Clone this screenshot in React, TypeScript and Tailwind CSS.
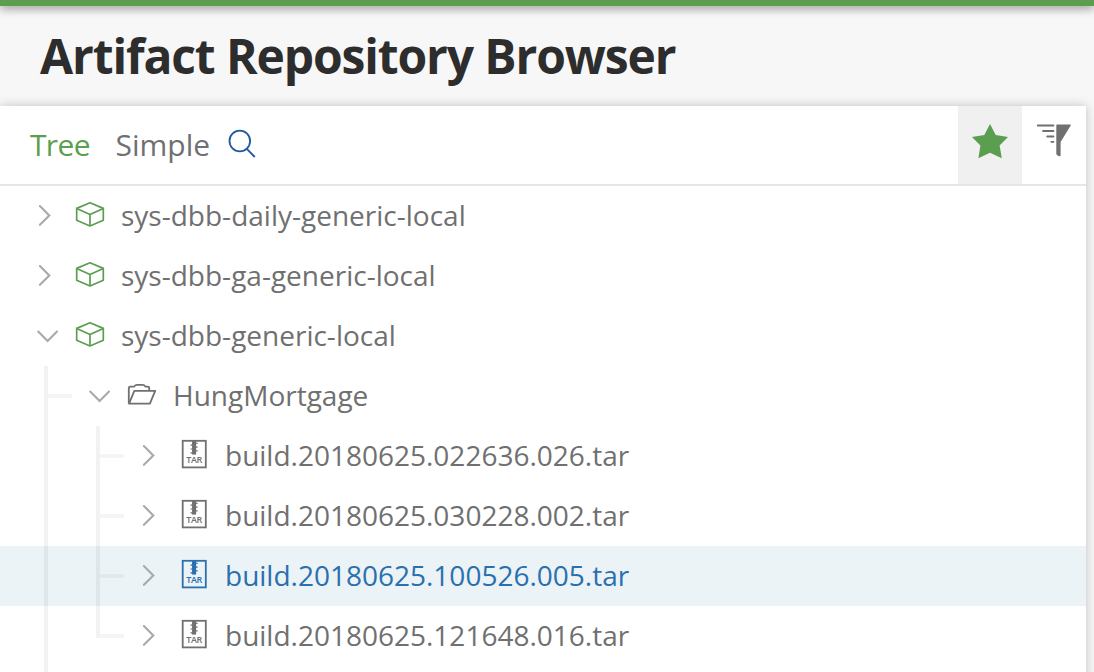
import React from "react";

type Kind = "repo" | "folder" | "tar";

interface Node {
  name: string;
  kind: Kind;
  level: number;
  open?: boolean;
  selected?: boolean;
  last?: boolean;
}

const nodes: Node[] = [
  { name: "sys-dbb-daily-generic-local", kind: "repo", level: 0 },
  { name: "sys-dbb-ga-generic-local", kind: "repo", level: 0 },
  { name: "sys-dbb-generic-local", kind: "repo", level: 0, open: true },
  { name: "HungMortgage", kind: "folder", level: 1, open: true },
  { name: "build.20180625.022636.026.tar", kind: "tar", level: 2 },
  { name: "build.20180625.030228.002.tar", kind: "tar", level: 2 },
  { name: "build.20180625.100526.005.tar", kind: "tar", level: 2, selected: true },
  { name: "build.20180625.121648.016.tar", kind: "tar", level: 2, last: true },
];

function Chevron({ open }: { open?: boolean }) {
  return (
    <svg className="h-[60px] w-8 shrink-0 text-[#a9a9a9]" viewBox="0 0 32 60" fill="none" stroke="currentColor" strokeWidth="2.1" strokeLinecap="round">
      {open ? <path d="M8.2 25.6 17.6 35 27 25.6" /> : <path d="M9.9 20 19.3 29.4 9.9 38.8" />}
    </svg>
  );
}

function KindIcon({ kind }: { kind: Kind }) {
  if (kind === "repo") {
    return (
      <svg className="h-[60px] w-8 shrink-0 text-[#5b9e50]" viewBox="0 0 32 60" fill="none" stroke="currentColor" strokeWidth="1.7" strokeLinejoin="round">
        <path d="M16 16.8 29.3 22.4V34.3L16 40 2.7 34.3V22.4Z" />
        <path d="M2.7 22.4 16 28.6 29.3 22.4M16 28.6V40" />
      </svg>
    );
  }
  if (kind === "folder") {
    return (
      <svg className="h-[60px] w-8 shrink-0 text-[#707070]" viewBox="0 0 32 60" fill="none" stroke="currentColor" strokeWidth="1.8" strokeLinejoin="round">
        <path d="M2.8 37.5V22Q2.8 20.6 4.3 20.6H8.2Q9.3 18.8 11 18.8H16.5Q18.3 18.8 19.4 20.6H21.5Q23.2 20.6 23.2 22V24.8" />
        <path d="M8.3 24.8H29.2L23.9 37.7H3.1Z" />
      </svg>
    );
  }
  return (
    <svg className="h-[60px] w-8 shrink-0" viewBox="0 0 32 60" fill="none" stroke="currentColor">
      <rect x="4.7" y="14.8" width="23.1" height="26.6" strokeWidth="1.8" />
      <path d="M16.1 15V28.6" strokeWidth="4" />
      <path d="M14 17.3H19.6M12.5 19.2H18M14 21.1H19.6M12.5 23H18M14 24.9H19.6M12.5 26.8H18" strokeWidth="1.2" />
      <text x="16.1" y="37.1" textAnchor="middle" fill="currentColor" stroke="none" className="font-['Open_Sans',sans-serif] text-[9px] font-semibold tracking-[-0.3px]">
        TAR
      </text>
    </svg>
  );
}

function Branch({ last }: { last?: boolean }) {
  return (
    <div className="flex h-[60px] w-7 shrink-0">
      <div className={last ? "h-8 w-1 bg-black/5" : "h-[60px] w-1 bg-black/5"} />
      <div className="mt-7 h-1 flex-1 bg-black/4" />
    </div>
  );
}

function TreeRow({ node }: { node: Node }) {
  return (
    <div className={node.selected ? "flex h-[60px] items-start bg-[#ebf3f7] text-[#2a6fae]" : "flex h-[60px] items-start text-[#707070]"}>
      {node.level === 0 && <div className="w-[30px] shrink-0" />}
      {node.level > 0 && <div className="w-11 shrink-0" />}
      {node.level === 2 && <div className="mr-12 h-[60px] w-1 shrink-0 bg-black/5" />}
      {node.level > 0 && <Branch last={node.last} />}
      <div className={node.level > 0 ? "ml-[10px] flex" : "flex"}>
        <Chevron open={node.open} />
      </div>
      <div className="ml-3 flex">
        <KindIcon kind={node.kind} />
      </div>
      <span className="ml-[15px] whitespace-nowrap text-[28px] leading-[58px]">{node.name}</span>
    </div>
  );
}

export default function App() {
  return (
    <div className="flex h-[672px] w-[1094px] flex-col overflow-hidden bg-[#f7f7f7] font-['Open_Sans',sans-serif]">
      <div className="h-1.5 shrink-0 bg-[#5b9e50] shadow-[0_2px_10px_rgba(0,0,0,0.5)]" />
      <header className="flex h-[100px] shrink-0 items-start pl-10">
        <h1 className="text-[48px] leading-[100px] font-bold tracking-[-1.12px] whitespace-nowrap text-[#2d2d2d]">Artifact Repository Browser</h1>
      </header>
      <main className="h-[620px] w-[1086px] shrink-0 bg-white shadow-[0_0_10px_rgba(0,0,0,0.22)]">
        <div className="flex h-20 items-center border-b-2 border-[#e6e6e6]">
          <button className="ml-[30px] text-[30px] leading-[78px] tracking-[-0.65px] text-[#5b9e50]">Tree</button>
          <button className="ml-[25.6px] text-[30px] leading-[78px] text-[#707070]">Simple</button>
          <svg className="ml-4 h-[78px] w-8" viewBox="0 0 32 78" fill="none" stroke="#1f5a9e" strokeWidth="1.8">
            <circle cx="13.8" cy="35" r="10.3" />
            <path d="M20.8 42.8 28.8 51" />
          </svg>
          <div className="ml-auto flex h-[78px] w-16 bg-[#f0f0f0]">
            <svg className="h-[78px] w-16" viewBox="0 0 64 78" fill="#5b9e50">
              <path d="M32 18 37.7 29.1 50 31 41.6 39.6 43.8 52.2 32 46.8 20.4 52.2 22.4 39.6 14 31 26.3 29.1Z" />
            </svg>
          </div>
          <svg className="h-[78px] w-16" viewBox="0 0 64 78">
            <path d="M15.7 19.5H31.5M21 25H31.5M25.2 30.5H31.5M29.2 35.8H31.5" stroke="#707070" strokeWidth="1.8" strokeLinecap="round" />
            <path d="M35 18.5H48.2Q49.3 18.5 48.7 19.6L38.6 36V49.2Q38.5 50.5 37.2 50.2L35.2 49.2Q34.3 48.8 34.3 47.8V19.3Q34.3 18.5 35 18.5Z" fill="#707070" />
          </svg>
        </div>
        <div>
          {nodes.map((node) => (
            <TreeRow key={node.name} node={node} />
          ))}
          <div className="flex h-10">
            <div className="ml-11 h-10 w-1 bg-black/5" />
          </div>
        </div>
      </main>
    </div>
  );
}
